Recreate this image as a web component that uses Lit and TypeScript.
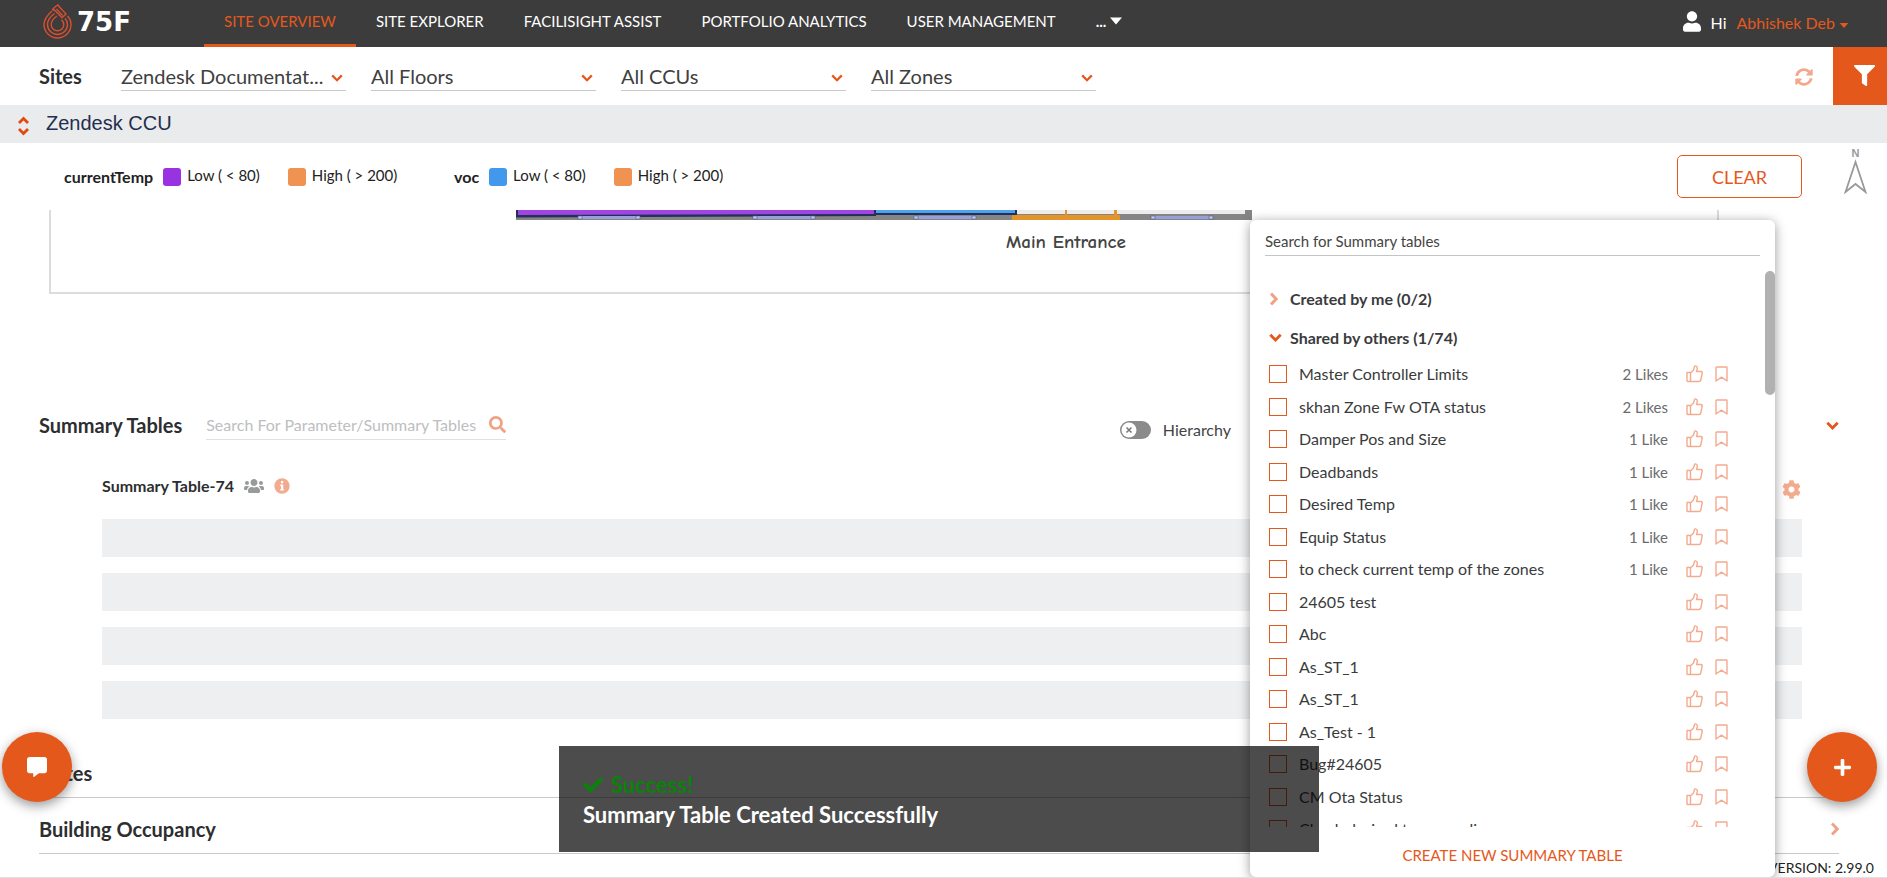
import { LitElement, html, css, svg } from "lit";
import { customElement, property } from "lit/decorators.js";

const GLYPHS: Record<string, { box: string; d: string }> = {
  user: { box: "0 0 448 512", d: "M224 256c70.7 0 128-57.3 128-128S294.7 0 224 0 96 57.3 96 128s57.3 128 128 128zm89.6 32h-16.7c-22.2 10.2-46.9 16-72.9 16s-50.6-5.8-72.9-16h-16.7C60.2 288 0 348.2 0 422.4V464c0 26.5 21.5 48 48 48h352c26.5 0 48-21.5 48-48v-41.6c0-74.2-60.2-134.4-134.4-134.4z" },
  filter: { box: "0 0 512 512", d: "M487.976 0H24.028C2.71 0-8.047 25.866 7.058 40.971L192 225.941V432c0 7.831 3.821 15.17 10.237 19.662l80 55.98C298.02 518.69 320 507.493 320 487.98V225.941l184.947-184.97C520.021 25.896 509.338 0 487.976 0z" },
  search: { box: "0 0 512 512", d: "M505 442.7L405.3 343c-4.5-4.5-10.6-7-17-7H372c27.6-35.3 44-79.7 44-128C416 93.1 322.9 0 208 0S0 93.1 0 208s93.1 208 208 208c48.3 0 92.7-16.4 128-44v16.3c0 6.4 2.5 12.5 7 17l99.7 99.7c9.4 9.4 24.6 9.4 33.9 0l28.3-28.3c9.4-9.4 9.4-24.6.1-34zM208 336c-70.7 0-128-57.2-128-128 0-70.7 57.2-128 128-128 70.7 0 128 57.2 128 128 0 70.7-57.2 128-128 128z" },
  cog: { box: "0 0 512 512", d: "M487.4 315.7l-42.6-24.6c4.3-23.2 4.3-47 0-70.2l42.6-24.6c4.9-2.8 7.1-8.6 5.5-14-11.1-35.6-30-67.8-54.7-94.6-3.8-4.1-10-5.1-14.8-2.3L380.8 110c-17.9-15.4-38.5-27.3-60.8-35.1V25.8c0-5.6-3.9-10.5-9.4-11.7-36.7-8.2-74.3-7.8-109.2 0-5.5 1.2-9.4 6.1-9.4 11.7V75c-22.2 7.9-42.8 19.8-60.8 35.1L88.7 85.5c-4.9-2.8-11-1.9-14.8 2.3-24.7 26.7-43.6 58.9-54.7 94.6-1.7 5.4.6 11.2 5.5 14L67.3 221c-4.3 23.2-4.3 47 0 70.2l-42.6 24.6c-4.9 2.8-7.1 8.6-5.5 14 11.1 35.6 30 67.8 54.7 94.6 3.8 4.1 10 5.1 14.8 2.3l42.6-24.6c17.9 15.4 38.5 27.3 60.8 35.1v49.2c0 5.6 3.9 10.5 9.4 11.7 36.7 8.2 74.3 7.8 109.2 0 5.5-1.2 9.4-6.1 9.4-11.7v-49.2c22.2-7.9 42.8-19.8 60.8-35.1l42.6 24.6c4.9 2.8 11 1.9 14.8-2.3 24.7-26.7 43.6-58.9 54.7-94.6 1.5-5.5-.7-11.3-5.6-14.1zM256 336c-44.1 0-80-35.9-80-80s35.9-80 80-80 80 35.9 80 80-35.9 80-80 80z" },
  sync: { box: "0 0 512 512", d: "M370.72 133.28C339.458 104.008 298.888 87.962 255.848 88c-77.458.068-144.328 53.178-162.791 126.85-1.344 5.363-6.122 9.15-11.651 9.15H24.103c-7.498 0-13.194-6.807-11.807-14.176C33.933 94.924 134.813 8 256 8c66.448 0 126.791 26.136 171.315 68.685L463.03 40.97C478.149 25.851 504 36.559 504 57.941V192c0 13.255-10.745 24-24 24H345.941c-21.382 0-32.09-25.851-16.971-40.971l41.75-41.749zM32 296h134.059c21.382 0 32.09 25.851 16.971 40.971l-41.75 41.75c31.262 29.273 71.835 45.319 114.876 45.28 77.418-.07 144.315-53.144 162.787-126.849 1.344-5.363 6.122-9.15 11.651-9.15h57.304c7.498 0 13.194 6.807 11.807 14.176C478.067 417.076 377.187 504 256 504c-66.448 0-126.791-26.136-171.315-68.685L48.97 471.03C33.851 486.149 8 475.441 8 454.059V320c0-13.255 10.745-24 24-24z" },
  check: { box: "0 56 512 400", d: "M173.898 439.404l-166.4-166.4c-9.997-9.997-9.997-26.206 0-36.204l36.203-36.204c9.997-9.998 26.207-9.998 36.204 0L192 312.69 432.095 72.596c9.997-9.997 26.207-9.997 36.204 0l36.203 36.204c9.997 9.997 9.997 26.206 0 36.204l-294.4 294.401c-9.998 9.997-26.207 9.997-36.204-.001z" },
  plus: { box: "0 32 448 448", d: "M416 208H272V64c0-17.67-14.33-32-32-32h-32c-17.67 0-32 14.33-32 32v144H32c-17.67 0-32 14.33-32 32v32c0 17.67 14.33 32 32 32h144v144c0 17.67 14.33 32 32 32h32c17.67 0 32-14.33 32-32V304h144c17.67 0 32-14.33 32-32v-32c0-17.67-14.33-32-32-32z" },
  comment: { box: "0 0 512 512", d: "M448 0H64C28.7 0 0 28.7 0 64v288c0 35.3 28.7 64 64 64h96v84c0 9.8 11.2 15.5 19.1 9.7L304 416h144c35.3 0 64-28.7 64-64V64c0-35.3-28.7-64-64-64z" },
  users: { box: "0 32 640 448", d: "M96 224c35.3 0 64-28.7 64-64s-28.7-64-64-64-64 28.7-64 64 28.7 64 64 64zm448 0c35.3 0 64-28.7 64-64s-28.7-64-64-64-64 28.7-64 64 28.7 64 64 64zm32 32h-64c-17.6 0-33.5 7.1-45.1 18.6 40.3 22.1 68.9 62 75.1 109.4h66c17.7 0 32-14.3 32-32v-32c0-35.3-28.7-64-64-64zm-256 0c61.9 0 112-50.1 112-112S381.9 32 320 32 208 82.1 208 144s50.1 112 112 112zm76.8 32h-8.3c-20.8 10-43.9 16-68.5 16s-47.6-6-68.5-16h-8.3C179.6 288 128 339.6 128 403.2V432c0 26.5 21.5 48 48 48h288c26.5 0 48-21.5 48-48v-28.8c0-63.6-51.6-115.2-115.2-115.2zm-223.7-13.4C161.5 263.1 145.6 256 128 256H64c-35.3 0-64 28.7-64 64v32c0 17.7 14.3 32 32 32h65.9c6.3-47.4 34.9-87.3 75.2-109.4z" },
  caret: { box: "0 0 12 7", d: "M0 0h12L6 7z" },
};

/* Solid glyph, sized by its parent through width and height. */
const glyph = (name: string, w: number, h = w) => html`<svg
  width=${w} height=${h} viewBox=${GLYPHS[name].box} fill="currentColor" aria-hidden="true"
><path d=${GLYPHS[name].d}></path></svg>`;

const chevron = (dir: "down" | "right", w: number, h: number, weight = 2) => html`<svg
  width=${w} height=${h} viewBox=${dir === "down" ? "0 0 12 8" : "0 0 8 12"}
  fill="none" stroke="currentColor" stroke-width=${weight} aria-hidden="true"
><path d=${dir === "down" ? "M1.2 1.4L6 6.2l4.8-4.8" : "M1.8 1.2L6.4 6l-4.6 4.8"}></path></svg>`;

interface TableItem { name: string; likes?: string; }

const NAV = ["SITE OVERVIEW", "SITE EXPLORER", "FACILISIGHT ASSIST", "PORTFOLIO ANALYTICS", "USER MANAGEMENT"];

const FILTERS = [
  { label: "Site", value: "Zendesk Documentat..." },
  { label: "Floor", value: "All Floors" },
  { label: "CCU", value: "All CCUs" },
  { label: "Zone", value: "All Zones" },
];

const LEGEND = [
  { name: "currentTemp", low: "purple" },
  { name: "voc", low: "blue" },
];

const SHARED: TableItem[] = [
  { name: "Master Controller Limits", likes: "2 Likes" },
  { name: "skhan Zone Fw OTA status", likes: "2 Likes" },
  { name: "Damper Pos and Size", likes: "1 Like" },
  { name: "Deadbands", likes: "1 Like" },
  { name: "Desired Temp", likes: "1 Like" },
  { name: "Equip Status", likes: "1 Like" },
  { name: "to check current temp of the zones", likes: "1 Like" },
  { name: "24605 test" },
  { name: "Abc" },
  { name: "As_ST_1" },
  { name: "As_ST_1" },
  { name: "As_Test - 1" },
  { name: "Bug#24605" },
  { name: "CM Ota Status" },
  { name: "Check desired temp reading" },
];

const base = css`
  * { box-sizing: border-box; }
  button, input, select { font: inherit; color: inherit; background: none; border: 0; padding: 0; margin: 0; border-radius: 0; }
  button { cursor: pointer; }
  svg { display: block; flex: none; }
`;

@customElement("top-bar")
export class TopBar extends LitElement {
  static styles = [base, css`
    :host { display: flex; align-items: stretch; height: 47px; flex: none; background: #3c3c3c; color: #fff; font-size: 16px; }
    .brand { display: flex; align-items: center; width: 204px; padding-left: 42px; }
    .nav { display: flex; flex: 1; font-size: 15px; }
    .link { display: flex; padding: 11px 20px 0; line-height: 20px; color: #fff; text-decoration: none; border-bottom: 3px solid transparent; white-space: nowrap; }
    .active { color: #e5581c; border-color: #e5581c; }
    .more { display: flex; gap: 4px; padding: 11px 20px 0; line-height: 20px; font-weight: 700; }
    .more svg { margin-top: 6px; }
    .account { display: flex; align-items: center; gap: 10px; padding: 0 38px 3px 0; }
    .account svg { margin-bottom: 2px; }
    .who { display: flex; align-items: center; gap: 4px; color: #e5581c; }
    .who svg { margin: 6px 0 0; }
    .mark { font: bold 26px "DejaVu Sans", sans-serif; fill: #fff; }
  `];

  render() {
    return html`
      <div class="brand">
        <svg width="92" height="40" viewBox="0 0 92 40" role="img" aria-label="75F">
          <g fill="none" stroke="#d9502f" stroke-width="1.400" stroke-linejoin="round">
            <path d="M10.500 5.500L13.500 2.500L16 .8L17.500 3L24 10L20 13.800L13 6.500Z"></path>
            <path d="M14.500 5L20.500 11.500"></path>
            <path d="M10 7C5 11.500 2 15 2 20.500A13.500 13.500 0 0 0 29 20.500C29 17.500 28 14.500 25.500 12"></path>
            <path d="M12.500 9.500C8.500 12.500 5.500 15.500 5.500 20.500A10 10 0 0 0 25.500 20.500C25.500 17.800 24.500 15.800 23 14.200"></path>
            <path d="M14.800 12C11.500 14.500 9.200 17 9.200 20.500A6.300 6.300 0 0 0 21.800 20.500C21.800 18.500 21 17.200 19.500 15.800"></path>
          </g>
          <text class="mark" x="35" y="27">75F</text>
        </svg>
      </div>
      <nav class="nav" aria-label="Primary">
        ${NAV.map((n, i) => html`<a class="link ${i === 0 ? "active" : ""}" href="#">${n}</a>`)}
        <button class="more" aria-label="More">... ${glyph("caret", 12, 8)}</button>
      </nav>
      <div class="account">
        ${glyph("user", 18, 21)}
        <span>Hi</span>
        <button class="who">Abhishek Deb ${glyph("caret", 10, 5)}</button>
      </div>`;
  }
}

@customElement("filter-bar")
export class FilterBar extends LitElement {
  static styles = [base, css`
    :host { display: flex; align-items: stretch; height: 58px; flex: none; background: #fff; }
    .title { margin: 0; width: 121px; padding: 16px 0 0 39px; font-size: 20px; line-height: 26px; font-weight: 700; }
    .filters { display: flex; gap: 25px; flex: 1; padding-top: 16px; }
    .pick { display: grid; width: 225px; height: 28px; border-bottom: 1px solid #c8c9ca; align-items: center; color: #3f4040; }
    .pick > * { grid-area: 1 / 1; }
    .pick svg { justify-self: end; margin: 3px 3px 0 0; color: #e5581c; pointer-events: none; }
    .select { appearance: none; width: 100%; height: 27px; font-size: 20px; line-height: 27px; outline: none; }
    .refresh { padding: 1px 20px 0; color: #f2a88b; }
    .open { width: 54px; display: grid; place-items: center; background: #e5581c; color: #fff; padding: 0 0 2px 8px; }
  `];

  render() {
    return html`
      <h1 class="title">Sites</h1>
      <div class="filters">
        ${FILTERS.map((f) => html`
          <label class="pick">
            <select class="select" aria-label=${f.label}><option>${f.value}</option></select>
            ${chevron("down", 12, 8, 2.3)}
          </label>`)}
      </div>
      <button class="refresh" aria-label="Refresh">${glyph("sync", 18)}</button>
      <button class="open" aria-label="Filter">${glyph("filter", 21)}</button>`;
  }
}

@customElement("floor-plan")
export class FloorPlan extends LitElement {
  static styles = [base, css`
    :host { display: flex; flex: none; justify-content: center; height: 84px; margin: 0 168px 0 49px; border: solid #dcdcdc; border-width: 0 2px 2px; box-sizing: border-box; }
    .caption { font: bold 19px "Comic Sans MS", "Comic Neue", fantasy; fill: #444; }
  `];

  render() {
    const windows = [62, 237, 398, 635];
    return html`
      <svg width="736" height="60" viewBox="0 0 736 60">
        <rect width="736" height="10" fill="#858585"></rect>
        <rect x="500" width="229" height="4" fill="#ececec"></rect>
        <path d="M0 0H360V6L0 7.500Z" fill="#22305a"></path>
        <path d="M2 0H358V4L2 5Z" fill="#a044e2"></path>
        <path d="M358 0H501V5H358Z" fill="#22305a"></path>
        <path d="M360 0H499V3H360Z" fill="#4ea2ee"></path>
        <rect x="496" y="5" width="108" height="5" fill="#e3952a"></rect>
        <rect x="549" width="2" height="5" fill="#e3952a"></rect>
        <rect x="598" width="3" height="5" fill="#e3952a"></rect>
        ${windows.map((x) => svg`
          <rect x=${x} y="6" width="62" height="3" fill="#98a0dc"></rect>
          <rect x=${x} y="6" width="4" height="3" fill="#c4c8f0" stroke="#555a80" stroke-width=".6"></rect>
          <rect x=${x + 58} y="6" width="4" height="3" fill="#c4c8f0" stroke="#555a80" stroke-width=".6"></rect>`)}
        <text class="caption" x="490" y="38">Main Entrance</text>
      </svg>`;
  }
}

@customElement("table-picker")
export class TablePicker extends LitElement {
  @property({ attribute: false }) items: TableItem[] = [];

  static styles = [base, css`
    :host { display: flex; flex-direction: column; width: 525px; background: #fff; border-radius: 6px; box-shadow: 0 2px 12px rgba(0, 0, 0, .4); color: #3a3b3c; }
    .search { flex: none; margin: 7px 15px 15px; height: 29px; border-bottom: 1px solid #c4c5c6; font-size: 15px; outline: none; color: #444; }
    .search::placeholder { color: #444; opacity: 1; }
    .body { display: flex; flex: 1; min-height: 0; overflow: hidden; }
    .groups { flex: 1; padding: 8px 37px 0 19px; }
    .thumb { width: 10px; height: 124px; border-radius: 5px; background: #b1b1b1; }
    .group { display: grid; grid-template-columns: 21px auto; align-items: center; height: 39px; width: 100%; text-align: left; font-size: 16px; line-height: 20px; font-weight: 700; }
    .shut svg { color: #f0a284; }
    .open svg { color: #e5581c; }
    .list { list-style: none; margin: 0; padding: 1px 0 0; }
    .row { display: flex; align-items: center; height: 32px; font-size: 16px; line-height: 20px; }
    .row:nth-child(even) { height: 33px; }
    .name { display: flex; align-items: center; gap: 12px; flex: 1; }
    .box { appearance: none; width: 18px; height: 18px; border: 1px solid #e5581c; }
    .likes { color: #6b6c6d; margin-right: 18px; font-size: 15px; }
    .act { color: #f3ab8f; }
    .act + .act { margin-left: 12px; }
    .create { flex: none; height: 50px; padding-top: 5px; font-size: 15px; color: #e5581c; }
  `];

  render() {
    return html`
      <input class="search" type="text" placeholder="Search for Summary tables" aria-label="Search for Summary tables" />
      <div class="body">
        <div class="groups">
          <button class="group shut">${chevron("right", 9, 14, 2.6)}Created by me (0/2)</button>
          <button class="group open">${chevron("down", 13, 9, 2.6)}Shared by others (1/74)</button>
          <ul class="list">
            ${this.items.map((t) => html`
              <li class="row">
                <label class="name"><input class="box" type="checkbox" />${t.name}</label>
                ${t.likes ? html`<span class="likes">${t.likes}</span>` : ""}
                <button class="act" aria-label="Like">
                  <svg width="17" height="18" viewBox="0 0 17 18" fill="none" stroke="currentColor" stroke-width="1.400" stroke-linejoin="round">
                    <path d="M1 7.500H4.500V16.500H1.500Q1 16.500 1 16ZM4.500 8L7.500 5L8.500 1.500Q8.800 .8 9.600 .9Q11.500 1.300 11.300 3.500L10.600 6.500H15Q16.400 6.700 16.200 8L14.800 15Q14.500 16.500 13 16.500H4.500"></path>
                  </svg>
                </button>
                <button class="act" aria-label="Bookmark">
                  <svg width="13" height="16" viewBox="0 0 13 16" fill="none" stroke="currentColor" stroke-width="1.400" stroke-linejoin="round">
                    <path d="M1 1.500Q1 1 1.500 1H11.500Q12 1 12 1.500V15L6.500 11.200L1 15Z"></path>
                  </svg>
                </button>
              </li>`)}
          </ul>
        </div>
        <div class="thumb"></div>
      </div>
      <button class="create">CREATE NEW SUMMARY TABLE</button>`;
  }
}

@customElement("app-root")
export class AppRoot extends LitElement {
  static styles = [base, css`
    :host { display: flex; flex-direction: column; position: relative; height: 100vh; overflow: hidden; background: #fff; border-bottom: 1px solid #dfe0e1; box-sizing: border-box; font-family: Lato, "Liberation Sans", sans-serif; font-size: 16px; color: #2d2e2f; }
    .ccu { display: flex; align-items: center; gap: 17px; flex: none; height: 38px; padding: 0 18px 2px; background: #eaebed; font: 20px "Liberation Sans", Arial, sans-serif; color: #1f2f4d; }
    .ccu svg { margin-top: 6px; }
    .legend { display: flex; align-items: flex-start; flex: none; height: 67px; padding-left: 64px; font-size: 15px; line-height: 20px; color: #222; }
    .scale { display: flex; padding-top: 22px; width: 390px; }
    .scale + .scale { width: auto; }
    .key { margin: 2px 10px 0 0; font-size: 16px; font-weight: 700; }
    .step { display: flex; gap: 6px; margin-right: 28px; }
    .chip { width: 18px; height: 18px; margin-top: 3px; border-radius: 3px; }
    .purple { background: #9932e0; }
    .blue { background: #4299ec; }
    .orange { background: #f09352; }
    .spacer { flex: 1; }
    .clear { width: 125px; height: 43px; margin: 12px 42px 0 0; border: 1px solid #e5581c; border-radius: 5px; color: #e5581c; font-size: 18px; }
    .compass { margin: 5px 20px 0 0; }
    .north { font: bold 11px "Liberation Sans", sans-serif; fill: #999; }
    .page { display: flex; flex-direction: column; flex: 1; min-height: 0; overflow: hidden; }
    .head { display: flex; flex: none; align-items: flex-start; margin: 107px 48px 0 39px; height: 48px; }
    .h2 { margin: 0; font-size: 20px; line-height: 26px; font-weight: 700; }
    .head .h2 { padding-top: 11px; }
    .find { display: flex; align-items: center; width: 300px; height: 31px; margin: 8px 0 0 24px; border-bottom: 1px solid #dfe0e1; color: #f0a284; }
    .query { flex: 1; min-width: 0; outline: none; color: #444; }
    .query::placeholder { color: #bdbebf; opacity: 1; }
    .switch { display: flex; align-items: center; gap: 12px; margin: 19px 595px 0 0; line-height: 20px; font-size: 16px; color: #444; }
    .track { display: grid; width: 31px; height: 18px; }
    .track > * { grid-area: 1 / 1; }
    .flip { appearance: none; width: 31px; height: 18px; border-radius: 9px; background: #8b8b8b; }
    .toggle { color: #e5581c; height: 48px; }
    .name { display: flex; flex: none; align-items: center; gap: 10px; margin: 0 85px 0 102px; height: 70px; padding-top: 4px; color: #999a9b; }
    .h3 { margin: 0; font-size: 16px; line-height: 20px; font-weight: 700; color: #2d2e2f; }
    .gear { color: #f3ab8f; padding: 7px 1px 0 0; }
    .bars { display: flex; flex: none; flex-direction: column; gap: 16px; margin: 0 85px 0 102px; }
    .bar { height: 38px; background: #eeeff1; }
    .section { display: flex; justify-content: space-between; align-items: center; margin: 0 48px 0 39px; height: 56px; padding-top: 7px; border-bottom: 1px solid #c8c9ca; color: #f0a284; flex: none; }
    .section .h2 { color: #2d2e2f; }
    .notes { margin-top: 23px; }
    .version { flex: none; margin: 4px 13px 0; text-align: right; font-size: 14px; line-height: 20px; color: #222; }
    .picker { position: absolute; top: 220px; right: 112px; bottom: 0; }
    .fab { position: absolute; bottom: 75px; width: 70px; height: 70px; border-radius: 50%; display: grid; place-items: center; background: #e5581c; color: #fff; box-shadow: 0 4px 12px rgba(0, 0, 0, .4); }
    .chat { left: 2px; }
    .add { right: 10px; }
    .toast { position: absolute; left: 559px; bottom: 25px; width: 760px; height: 106px; padding: 24px; background: rgba(0, 0, 0, .7); color: #fff; font-size: 22px; line-height: 30px; font-weight: 700; }
    .ok { display: flex; align-items: center; gap: 8px; color: #0a820a; }
    .msg { margin: 0; }
  `];

  render() {
    return html`
      <top-bar></top-bar>
      <filter-bar></filter-bar>
      <div class="ccu">
        <svg width="11" height="20" viewBox="0 0 11 20" fill="none" stroke="#e5480c" stroke-width="2.800"><path d="M1 7L5.500 2.500L10 7M1 13L5.500 17.500L10 13"></path></svg>
        Zendesk CCU
      </div>
      <div class="legend">
        ${LEGEND.map((l) => html`
          <div class="scale">
            <span class="key">${l.name}</span>
            <span class="step"><i class="chip ${l.low}"></i>Low ( &lt; 80)</span>
            <span class="step"><i class="chip orange"></i>High ( &gt; 200)</span>
          </div>`)}
        <span class="spacer"></span>
        <button class="clear">CLEAR</button>
        <svg class="compass" width="23" height="46" viewBox="0 0 23 46">
          <text class="north" x="11.500" y="9" text-anchor="middle">N</text>
          <path d="M11.500 14L21.500 44L11.500 36L1.500 44Z" fill="none" stroke="#999" stroke-width="1.800"></path>
        </svg>
      </div>
      <main class="page">
        <floor-plan></floor-plan>
        <div class="head">
          <h2 class="h2">Summary Tables</h2>
          <label class="find">
            <input class="query" type="text" placeholder="Search For Parameter/Summary Tables" aria-label="Search For Parameter/Summary Tables" />
            ${glyph("search", 17)}
          </label>
          <span class="spacer"></span>
          <label class="switch">
            <span class="track">
              <input class="flip" type="checkbox" role="switch" />
              <svg width="31" height="18" viewBox="0 0 31 18"><circle cx="9" cy="9" r="7.500" fill="#fff"></circle><path d="M6.500 6.500l5 5m0-5l-5 5" stroke="#777" stroke-width="1.500"></path></svg>
            </span>
            Hierarchy
          </label>
          <button class="toggle" aria-label="Collapse Summary Tables">${chevron("down", 13, 9, 2.6)}</button>
        </div>
        <div class="name">
          <h3 class="h3">Summary Table-74</h3>
          ${glyph("users", 20, 14)}
          <svg width="16" height="16" viewBox="0 0 16 16"><circle cx="8" cy="8" r="7.700" fill="#f3ab8f"></circle><path d="M7 3h2.200v2.200H7zM6.200 6.500h3v4.700h.9v1.400H6.100v-1.400h.9V7.900h-.8z" fill="#fff"></path></svg>
          <span class="spacer"></span>
          <button class="gear" aria-label="Settings">${glyph("cog", 19)}</button>
        </div>
        <div class="bars">${[0, 1, 2, 3].map(() => html`<div class="bar"></div>`)}</div>
        <section class="section notes"><h2 class="h2">Notes</h2></section>
        <section class="section"><h2 class="h2">Building Occupancy</h2>${chevron("right", 9, 14, 2.6)}</section>
        <div class="version">VERSION: 2.99.0</div>
      </main>
      <table-picker class="picker" .items=${SHARED}></table-picker>
      <button class="fab chat" aria-label="Chat">${glyph("comment", 20)}</button>
      <button class="fab add" aria-label="Add">${glyph("plus", 17)}</button>
      <div class="toast" role="status">
        <div class="ok">${glyph("check", 20, 16)}Success!</div>
        <p class="msg">Summary Table Created Successfully</p>
      </div>`;
  }
}
